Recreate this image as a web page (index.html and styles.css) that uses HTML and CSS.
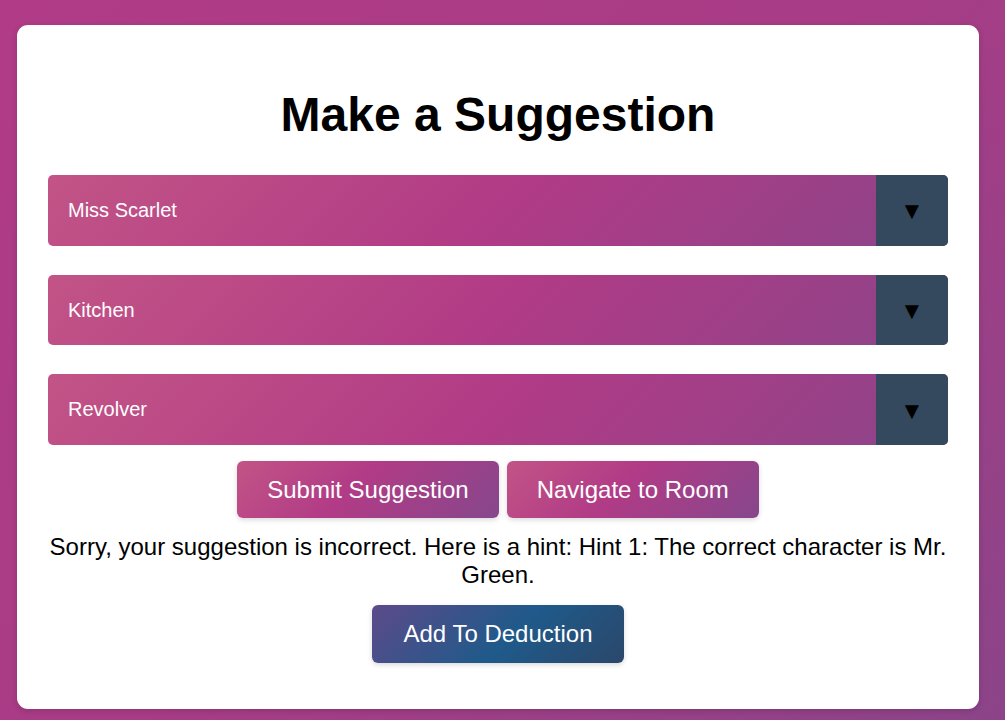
FILE: index.html
```html
<!DOCTYPE html>
<html>
<head>
<meta charset="utf-8">
<link rel="stylesheet" href="styles.css">
</head>
<body>
<div class="page">
  <div class="card">
    <h1 class="title">Make a Suggestion</h1>
    <div class="select"><span class="select-label">Miss Scarlet</span><span class="select-arrow">▼</span></div>
    <div class="select"><span class="select-label">Kitchen</span><span class="select-arrow">▼</span></div>
    <div class="select"><span class="select-label">Revolver</span><span class="select-arrow">▼</span></div>
    <div class="actions">
      <button class="btn">Submit Suggestion</button>
      <button class="btn btn-nav">Navigate to Room</button>
    </div>
    <p class="hint">Sorry, your suggestion is incorrect. Here is a hint: Hint 1: The correct character is Mr. Green.</p>
    <div class="actions">
      <button class="btn btn-deduce">Add To Deduction</button>
    </div>
  </div>
</div>
</body>
</html>
```
FILE: styles.css
```css
* { box-sizing: border-box; }
html, body { margin: 0; height: 100%; }
body {
  font-family: "Liberation Sans", Arial, sans-serif;
  background: linear-gradient(135deg, #b13b86 0%, #a83c86 50%, #8c4489 100%);
  overflow: hidden;
}
.page {
  padding: 25px 26px 0 17px;
}
.card {
  background: #fff;
  border-radius: 11px;
  box-shadow: 0 2px 6px rgba(0,0,0,0.15);
  padding: 30px 31px 46px 31px;
  display: flex;
  flex-direction: column;
  height: 684px;
}
.title {
  font-size: 48px;
  font-weight: bold;
  text-align: center;
  margin: 32px 0 33px;
  line-height: 55px;
  color: #000;
}
.select {
  display: flex;
  height: 71px;
  border-radius: 5px;
  overflow: hidden;
  background: linear-gradient(135deg, #c25486 0%, #b13b86 50%, #8c4489 100%);
  margin-bottom: 29px;
}
.select:nth-of-type(3) { margin-bottom: 16px; }
.select-label {
  flex: 1;
  color: #fff;
  font-size: 20px;
  padding-left: 20px;
  display: flex;
  align-items: center;
}
.select-arrow {
  width: 72px;
  background: #34495e;
  color: #000;
  font-size: 24px;
  display: flex;
  align-items: center;
  justify-content: center;
  padding-top: 2px;
}
.actions {
  display: flex;
  justify-content: center;
  gap: 8px;
}
.btn {
  font-family: "Liberation Sans", Arial, sans-serif;
  font-size: 24px;
  color: #fff;
  border: none;
  border-radius: 6px;
  height: 57px;
  padding: 0 30px;
  background: linear-gradient(135deg, #c25486 0%, #b13b86 45%, #86478c 100%);
  box-shadow: 0 2px 5px rgba(0,0,0,0.15);
}
.btn-deduce {
  height: 58px;
  padding: 0 31px;
  background: linear-gradient(135deg, #5d4a8a 0%, #1f5a8a 55%, #2b476b 100%);
}
.hint {
  font-size: 24px;
  line-height: 28px;
  text-align: center;
  margin: 15px 0 16px;
  color: #000;
}
```
